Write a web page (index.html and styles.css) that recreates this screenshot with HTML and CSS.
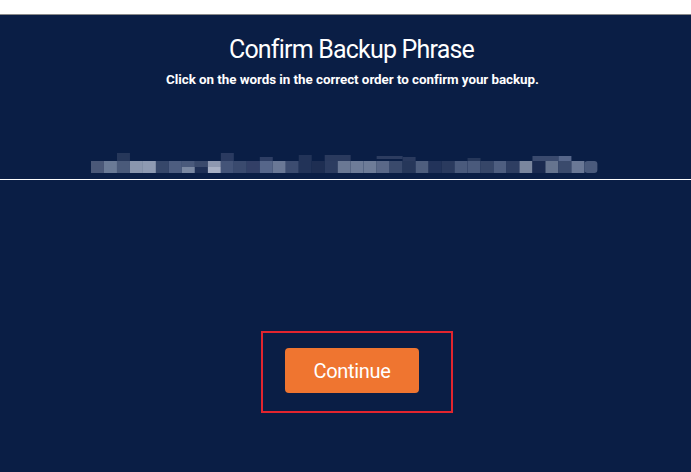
FILE: index.html
```html
<!DOCTYPE html>
<html lang="en">
<head>
    <meta charset="UTF-8">
    <title>Confirm Backup Phrase</title>
    <link rel="stylesheet" href="styles.css">
</head>
<body>
    <div class="top-bar"></div>
    <main class="confirm">
        <h1>Confirm Backup Phrase</h1>
        <p class="hint">Click on the words in the correct order to confirm your backup.</p>

        <div class="phrase">
            <svg width="507" height="24" viewBox="0 0 492 24" preserveAspectRatio="none">
                <rect x="0" y="8" width="12.6" height="12" fill="#4a5878"/>
                <rect x="12.6" y="8" width="12.6" height="12" fill="#6a7a96"/>
                <rect x="25.2" y="0" width="12.6" height="8" fill="#26375a"/>
                <rect x="25.2" y="8" width="12.6" height="12" fill="#4a5a7a"/>
                <rect x="37.8" y="8" width="12.6" height="12" fill="#8a96ae"/>
                <rect x="50.4" y="8" width="12.6" height="12" fill="#8e9ab2"/>
                <rect x="63" y="8" width="12.6" height="12" fill="#36476a"/>
                <rect x="75.6" y="8" width="12.6" height="12" fill="#4d5d80"/>
                <rect x="88.2" y="8" width="12.6" height="6" fill="#4a5a7c"/>
                <rect x="88.2" y="14" width="12.6" height="6" fill="#7a88a2"/>
                <rect x="100.8" y="8" width="12.6" height="6" fill="#3a4a6c"/>
                <rect x="100.8" y="14" width="12.6" height="6" fill="#1e2f55"/>
                <rect x="113.4" y="8" width="12.6" height="6" fill="#8e98b0"/>
                <rect x="113.4" y="14" width="12.6" height="6" fill="#a8b0c4"/>
                <rect x="126" y="0" width="12.6" height="8" fill="#2a3a60"/>
                <rect x="126" y="8" width="12.6" height="12" fill="#445478"/>
                <rect x="138.6" y="8" width="12.6" height="12" fill="#3a4a6e"/>
                <rect x="151.2" y="8" width="12.6" height="12" fill="#323f66"/>
                <rect x="163.8" y="4" width="12.6" height="4" fill="#2e3e64"/>
                <rect x="163.8" y="8" width="12.6" height="12" fill="#56668a"/>
                <rect x="176.4" y="8" width="12.6" height="12" fill="#6a7896"/>
                <rect x="189" y="8" width="12.6" height="12" fill="#3c4c70"/>
                <rect x="201.6" y="2" width="12.6" height="6" fill="#223358"/>
                <rect x="201.6" y="8" width="12.6" height="12" fill="#223358"/>
                <rect x="214.2" y="8" width="12.6" height="12" fill="#1e2e52"/>
                <rect x="226.8" y="2" width="25.2" height="6" fill="#2a3a5e"/>
                <rect x="226.8" y="8" width="12.6" height="12" fill="#2c3c60"/>
                <rect x="239.4" y="8" width="12.6" height="12" fill="#6a7894"/>
                <rect x="252" y="8" width="12.6" height="12" fill="#6e7c98"/>
                <rect x="264.6" y="8" width="12.6" height="12" fill="#6e7c98"/>
                <rect x="277.2" y="3" width="25.2" height="3" fill="#2c3c60"/>
                <rect x="277.2" y="8" width="12.6" height="12" fill="#5a6888"/>
                <rect x="289.8" y="8" width="12.6" height="12" fill="#3a4a6c"/>
                <rect x="302.4" y="4" width="12.6" height="4" fill="#2a3a5e"/>
                <rect x="302.4" y="8" width="12.6" height="12" fill="#26375a"/>
                <rect x="315" y="8" width="12.6" height="12" fill="#4e5e7e"/>
                <rect x="327.6" y="8" width="12.6" height="12" fill="#22335a"/>
                <rect x="340.2" y="8" width="12.6" height="12" fill="#2a3a5e"/>
                <rect x="352.8" y="8" width="12.6" height="12" fill="#4a5a7c"/>
                <rect x="365.4" y="5" width="12.6" height="3" fill="#26375a"/>
                <rect x="365.4" y="8" width="12.6" height="12" fill="#4a5a7c"/>
                <rect x="378" y="8" width="12.6" height="12" fill="#364668"/>
                <rect x="390.6" y="8" width="12.6" height="12" fill="#4e5e80"/>
                <rect x="403.2" y="8" width="12.6" height="12" fill="#2e3e62"/>
                <rect x="415.8" y="8" width="12.6" height="12" fill="#7a869e"/>
                <rect x="428.4" y="3" width="25.2" height="5" fill="#3a4a6e"/>
                <rect x="428.4" y="8" width="12.6" height="12" fill="#1a2a50"/>
                <rect x="441" y="8" width="12.6" height="12" fill="#66748f"/>
                <rect x="453.6" y="3" width="12.6" height="5" fill="#56668a"/>
                <rect x="453.6" y="8" width="12.6" height="12" fill="#3a4a6c"/>
                <rect x="466.2" y="8" width="12.6" height="12" fill="#6a7896"/>
                <rect x="478.8" y="8" width="12.6" height="12" rx="3" fill="#4a5a7c"/>
            </svg>
        </div>

        <div class="divider"></div>

        <div class="actions">
            <div class="highlight">
                <button class="continue-button">Continue</button>
            </div>
        </div>
    </main>
</body>
</html>
```

FILE: styles.css
```css
body {
    margin: 0;
    padding: 0;
    background-color: #0a1e45;
    color: white;
    font-family: 'Roboto', 'Liberation Sans', sans-serif;
    overflow: hidden;
}

.top-bar {
    height: 14px;
    background-color: white;
    border-bottom: 1px solid #8a8a8a;
}

.confirm {
    display: flex;
    flex-direction: column;
    align-items: stretch;
}

h1 {
    margin: 21px 0 0;
    padding-left: 12px;
    text-align: center;
    font-size: 25px;
    font-weight: 400;
    line-height: 28px;
    letter-spacing: -0.8px;
}

.hint {
    margin: 8px 0 0;
    padding-left: 14px;
    text-align: center;
    font-size: 13.4px;
    font-weight: 700;
    line-height: 16px;
    letter-spacing: -0.05px;
}

.phrase {
    margin: 65px 0 0 91px;
    height: 24px;
}

.phrase svg {
    display: block;
}

.divider {
    margin-top: 2px;
    height: 1px;
    background-color: white;
}

.actions {
    display: flex;
    justify-content: center;
    padding: 151px 0 0 23px;
}

.highlight {
    width: 192px;
    height: 82px;
    border: 2px solid #e2252e;
    padding: 15px 0 0 22px;
    box-sizing: border-box;
}

.continue-button {
    width: 134px;
    height: 45px;
    background-color: #ef7530;
    color: white;
    border: none;
    border-radius: 4px;
    font-family: 'Roboto', 'Liberation Sans', sans-serif;
    font-size: 20px;
    font-weight: 400;
    letter-spacing: -0.3px;
    cursor: pointer;
}
```
